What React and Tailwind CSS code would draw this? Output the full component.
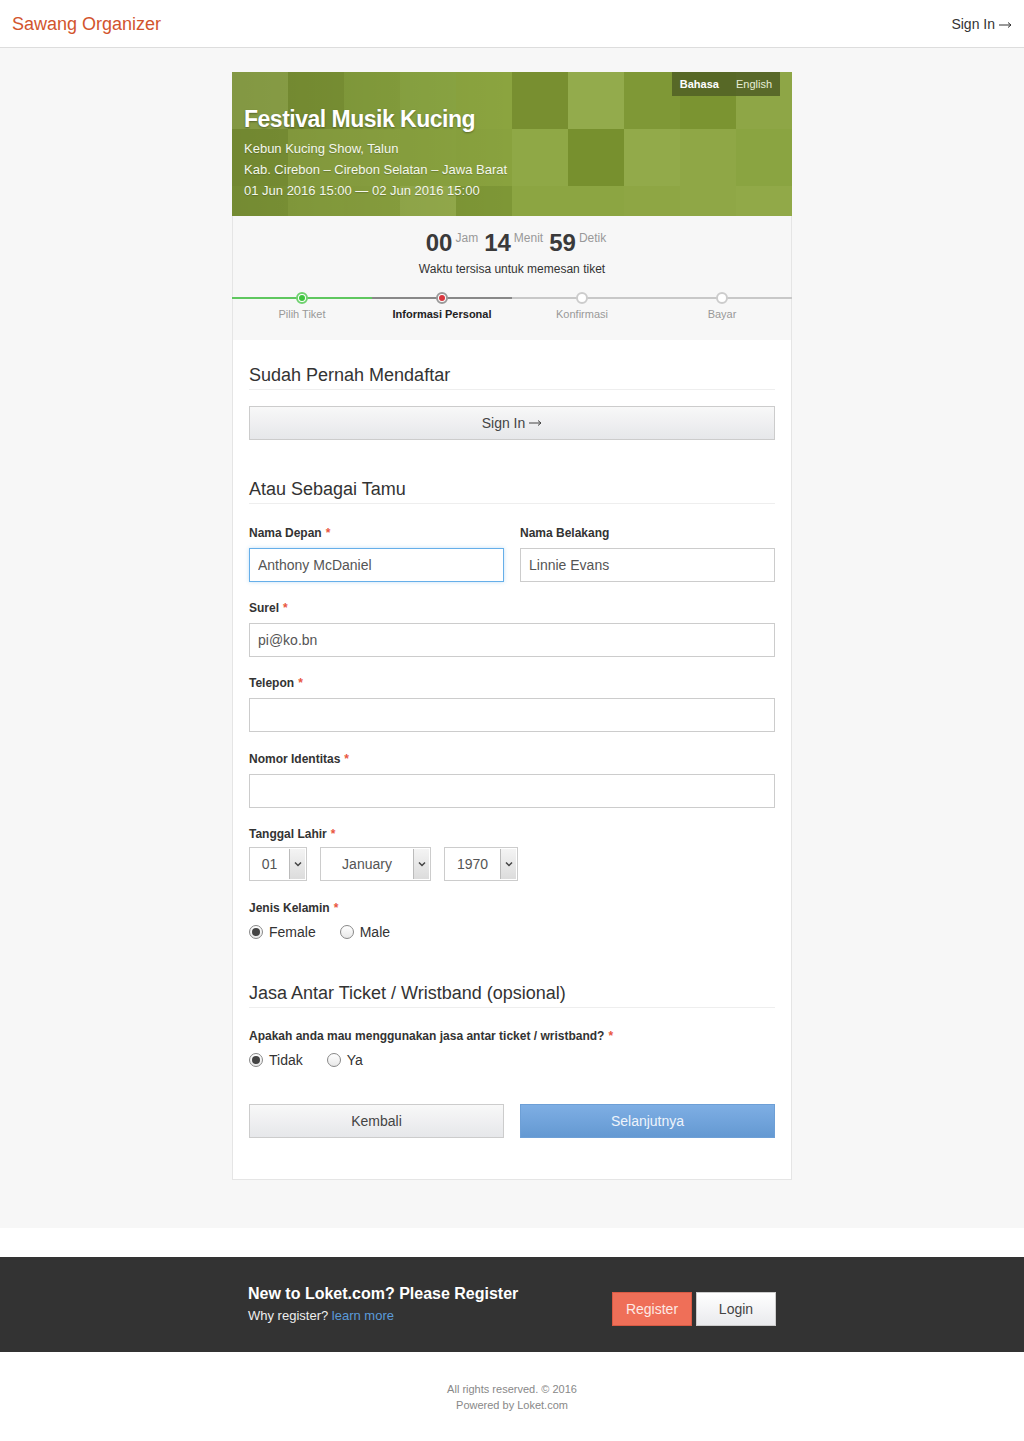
import { useState } from 'react'

const tiles = [
  ['#91a84a', '#7d9535', '#86a03d', '#8aa542', '#8ba43f', '#788f30', '#93ab4c', '#7f9836', '#7b9431', '#8ea646'],
  ['#7e9636', '#8ca441', '#8ca441', '#8aa33f', '#89a23e', '#8fa846', '#77902e', '#92aa4a', '#8fa746', '#8aa441'],
  ['#819a38', '#8aa33f', '#8aa23f', '#93aa4b', '#7e9736', '#8ca542', '#8ca542', '#8ea644', '#8fa746', '#91a948'],
]

const steps = [
  { label: 'Pilih Tiket', state: 'done' },
  { label: 'Informasi Personal', state: 'current' },
  { label: 'Konfirmasi', state: 'todo' },
  { label: 'Bayar', state: 'todo' },
]

function Arrow({ className }) {
  return (
    <svg className={className} width="13" height="8" viewBox="0 0 13 8">
      <path d="M0 4 H12 M9 1.5 L12 4 L9 6.5" fill="none" stroke="currentColor" strokeWidth="1" />
    </svg>
  )
}

function Req() {
  return <span className="text-[#e9573f] ml-1">*</span>
}

function Label({ children, required, tight }) {
  return (
    <label className={'block text-[12px] font-bold text-[#333] leading-[16px] ' + (tight ? 'mb-[5px]' : 'mb-[7px]')}>
      {children}
      {required && <Req />}
    </label>
  )
}

function TextInput({ value, focused }) {
  return (
    <input
      defaultValue={value}
      className={
        'block w-full h-[34px] px-2 text-[14px] text-[#555] bg-white outline-none ' +
        (focused ? 'border border-[#66afe9] shadow-[0_0_4px_rgba(102,175,233,0.4)]' : 'border border-[#ccc]')
      }
    />
  )
}

function Select({ value, width }) {
  return (
    <div className={'flex h-[34px] border border-[#ccc] bg-white ' + width}>
      <div className="flex-1 flex items-center justify-center text-[14px] text-[#555]">{value}</div>
      <div className="w-[16px] my-[1px] mr-[1px] flex items-center justify-center bg-gradient-to-b from-[#f4f4f4] to-[#dcdcdc] border-l border-[#bbb]">
        <svg width="8" height="6" viewBox="0 0 8 6">
          <path d="M1 1.5 L4 4.5 L7 1.5" fill="none" stroke="#444" strokeWidth="1.5" />
        </svg>
      </div>
    </div>
  )
}

function Radio({ checked, label, onClick }) {
  return (
    <button onClick={onClick} className="flex items-center gap-[6px] text-[14px] text-[#333] leading-[18px]">
      <span className="w-[14px] h-[14px] rounded-full border border-[#888] bg-gradient-to-b from-white to-[#e8e8e8] flex items-center justify-center">
        {checked && <span className="w-[8px] h-[8px] rounded-full bg-[#444]" />}
      </span>
      {label}
    </button>
  )
}

function SectionTitle({ children }) {
  return (
    <div className="border-b border-[#eee] pb-[2px] mb-[16px]">
      <h2 className="text-[18px] text-[#333] leading-[24px]">{children}</h2>
    </div>
  )
}

export default function App() {
  const [gender, setGender] = useState('female')
  const [antar, setAntar] = useState('tidak')

  return (
    <div className="min-h-screen bg-white text-[#333]" style={{ fontFamily: '"Liberation Sans", Arial, sans-serif' }}>
      {/* Top bar */}
      <header className="h-[48px] bg-white border-b border-[#ddd] shadow-[0_1px_2px_rgba(0,0,0,0.08)] flex items-center justify-between px-[12px] pt-[2px]">
        <div className="text-[18px] text-[#d2542d]">Sawang Organizer</div>
        <div className="text-[14px] text-[#333] flex items-center gap-[4px]">
          Sign In <Arrow />
        </div>
      </header>

      <main className="bg-[#f7f7f7] pt-[24px] pb-[48px]">
        <div className="w-[560px] mx-auto">
          {/* Banner */}
          <div className="relative h-[144px] overflow-hidden">
            <div className="absolute inset-0 grid grid-cols-10 auto-rows-[57px]">
              {tiles.flat().map((c, i) => (
                <div key={i} style={{ backgroundColor: c }} />
              ))}
            </div>
            <div className="absolute inset-0 bg-gradient-to-r from-black/10 via-black/0 to-transparent" />
            <div className="absolute right-[12px] top-0 h-[24px] flex items-center gap-[17px] px-[8px] bg-[#536326]/90 text-[11px]">
              <span className="font-bold text-white">Bahasa</span>
              <span className="text-[#e8eed6]">English</span>
            </div>
            <div className="relative pl-[12px] pt-[32px] text-white">
              <h1 className="text-[23px] font-bold leading-[30px] tracking-[-0.5px] [text-shadow:0_1px_2px_rgba(0,0,0,0.35)]">
                Festival Musik Kucing
              </h1>
              <div className="mt-[4px] text-[13px] leading-[21px] text-[#f4f7ec] [text-shadow:0_1px_1px_rgba(0,0,0,0.2)]">
                <p>Kebun Kucing Show, Talun</p>
                <p>Kab. Cirebon – Cirebon Selatan – Jawa Barat</p>
                <p>01 Jun 2016 15:00 — 02 Jun 2016 15:00</p>
              </div>
            </div>
          </div>

          {/* Countdown + steps */}
          <div className="bg-[#f7f7f7] border-x border-[#e5e5e5] h-[124px] pt-[12px]">
            <div className="flex justify-center items-start gap-[6px] h-[30px] pl-[8px]">
              {[
                ['00', 'Jam'],
                ['14', 'Menit'],
                ['59', 'Detik'],
              ].map(([n, u]) => (
                <div key={u} className="flex items-start">
                  <span className="text-[24px] font-bold text-[#3a3a3a] leading-[30px]">{n}</span>
                  <span className="text-[12px] text-[#999] ml-[3px] leading-[14px] mt-[3px]">{u}</span>
                </div>
              ))}
            </div>
            <p className="text-center text-[12px] text-[#333] mt-[3px] leading-[16px]">Waktu tersisa untuk memesan tiket</p>
            <div className="grid grid-cols-4 mt-[15px] -mx-px">
              {steps.map((s, i) => (
                <div key={s.label} className="flex flex-col items-center">
                  <div className="relative w-full h-[12px] flex items-center justify-center">
                    <div
                      className={
                        'absolute left-0 right-0 top-[5px] h-[2px] ' +
                        (i === 0 ? 'bg-[#5fc75f]' : i === 1 ? 'bg-[#888]' : 'bg-[#c8c8c8]')
                      }
                    />
                    {s.state === 'done' && (
                      <span className="relative w-[12px] h-[12px] rounded-full bg-white border-2 border-[#6fd16f] flex items-center justify-center">
                        <span className="w-[6px] h-[6px] rounded-full bg-[#3fc43f]" />
                      </span>
                    )}
                    {s.state === 'current' && (
                      <span className="relative w-[12px] h-[12px] rounded-full bg-white border-2 border-[#999] flex items-center justify-center">
                        <span className="w-[6px] h-[6px] rounded-full bg-[#d9363e]" />
                      </span>
                    )}
                    {s.state === 'todo' && (
                      <span className="relative w-[12px] h-[12px] rounded-full bg-white border-2 border-[#ccc]" />
                    )}
                  </div>
                  <span
                    className={
                      'mt-[3px] text-[11px] leading-[14px] ' +
                      (s.state === 'current' ? 'font-bold text-[#222]' : 'text-[#999]')
                    }
                  >
                    {s.label}
                  </span>
                </div>
              ))}
            </div>
          </div>

          {/* Form */}
          <div className="bg-white border border-t-0 border-[#e5e5e5] px-[16px] pt-[23px] pb-[41px]">
            <SectionTitle>Sudah Pernah Mendaftar</SectionTitle>
            <button className="w-full h-[34px] border border-[#ccc] bg-gradient-to-b from-[#f8f8f8] to-[#e6e7ea] text-[14px] text-[#444] flex items-center justify-center gap-[4px]">
              Sign In <Arrow />
            </button>

            <div className="mt-[37px]">
              <SectionTitle>Atau Sebagai Tamu</SectionTitle>
            </div>

            <div className="grid grid-cols-2 gap-x-[16px] pt-[5px]">
              <div>
                <Label required>Nama Depan</Label>
                <TextInput value="Anthony McDaniel" focused />
              </div>
              <div>
                <Label>Nama Belakang</Label>
                <TextInput value="Linnie Evans" />
              </div>
            </div>

            <div className="mt-[18px]">
              <Label required>Surel</Label>
              <TextInput value="pi@ko.bn" />
            </div>
            <div className="mt-[18px]">
              <Label required>Telepon</Label>
              <TextInput value="" />
            </div>
            <div className="mt-[19px]">
              <Label required>Nomor Identitas</Label>
              <TextInput value="" />
            </div>

            <div className="mt-[18px]">
              <Label required tight>Tanggal Lahir</Label>
              <div className="flex gap-[13px]">
                <Select value="01" width="w-[58px]" />
                <Select value="January" width="w-[111px]" />
                <Select value="1970" width="w-[74px]" />
              </div>
            </div>

            <div className="mt-[19px]">
              <Label required>Jenis Kelamin</Label>
              <div className="flex gap-[24px] mt-[6px]">
                <Radio checked={gender === 'female'} label="Female" onClick={() => setGender('female')} />
                <Radio checked={gender === 'male'} label="Male" onClick={() => setGender('male')} />
              </div>
            </div>

            <div className="mt-[40px]">
              <SectionTitle>Jasa Antar Ticket / Wristband (opsional)</SectionTitle>
            </div>
            <div className="pt-[4px]">
              <Label required>Apakah anda mau menggunakan jasa antar ticket / wristband?</Label>
              <div className="flex gap-[24px] mt-[7px]">
                <Radio checked={antar === 'tidak'} label="Tidak" onClick={() => setAntar('tidak')} />
                <Radio checked={antar === 'ya'} label="Ya" onClick={() => setAntar('ya')} />
              </div>
            </div>

            <div className="grid grid-cols-2 gap-x-[16px] mt-[35px]">
              <button className="h-[34px] border border-[#ccc] bg-gradient-to-b from-[#f8f8f8] to-[#e6e7ea] text-[14px] text-[#444]">
                Kembali
              </button>
              <button className="h-[34px] border border-[#6d9fd6] bg-gradient-to-b from-[#7eaee4] to-[#6499d2] text-[14px] text-[#eef4fb]">
                Selanjutnya
              </button>
            </div>
          </div>
        </div>
      </main>

      <div className="h-[29px] bg-white" />

      {/* Register banner */}
      <section className="bg-[#333] h-[95px]">
        <div className="w-[528px] mx-auto h-full flex items-center justify-between">
          <div>
            <h3 className="text-[16px] font-bold text-white leading-[22px]">New to Loket.com? Please Register</h3>
            <p className="text-[13px] text-[#eee] leading-[20px] mt-[1px]">
              Why register? <a className="text-[#5b9bd9]">learn more</a>
            </p>
          </div>
          <div className="flex gap-[4px] mt-[9px]">
            <button className="w-[80px] h-[34px] bg-[#ef6f58] border border-[#d95a44] text-[14px] text-[#fde9e4]">Register</button>
            <button className="w-[80px] h-[34px] bg-gradient-to-b from-white to-[#e9eaed] border border-[#ccc] text-[14px] text-[#444]">Login</button>
          </div>
        </div>
      </section>

      <footer className="pt-[29px] pb-[28px] text-center text-[11px] text-[#888] leading-[16px]">
        <p>All rights reserved. © 2016</p>
        <p>Powered by Loket.com</p>
      </footer>
    </div>
  )
}
